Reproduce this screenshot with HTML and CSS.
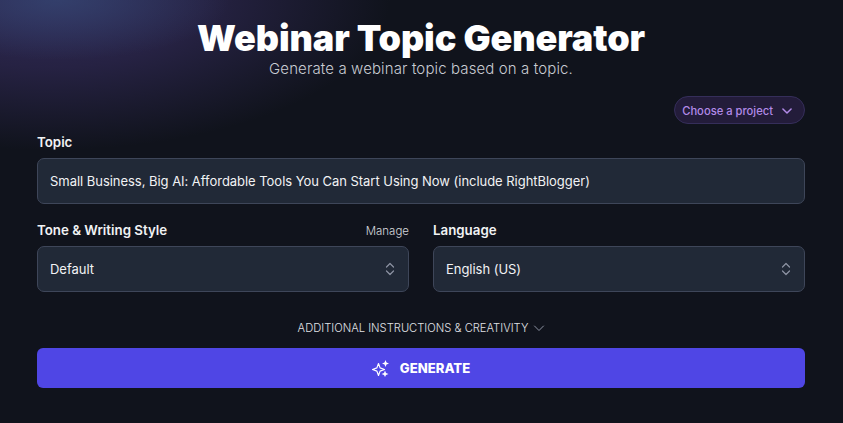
FILE: index.html
```html
<!DOCTYPE html>
<html>
	<head>
		<title>Webinar Topic Generator</title>
		<link rel="stylesheet" href="styles.css">
	</head>
	<body>
	<div class="page">
		<div class="header">
			<h1>Webinar Topic Generator</h1>
			<p>Generate a webinar topic based on a topic.</p>
		</div>
		<div class="projectRow">
			<span class="projectBtn">Choose a project
				<svg width="14" height="14" viewBox="0 0 24 24" fill="none" stroke="currentColor" stroke-width="2.6" stroke-linecap="round" stroke-linejoin="round"><path d="M5 8.5l7 7 7-7"/></svg>
			</span>
		</div>
		<div class="labelRow"><label>Topic</label></div>
		<div class="field">Small Business, Big AI: Affordable Tools You Can Start Using Now (include RightBlogger)</div>
		<div class="columns">
			<div>
				<div class="labelRow"><label>Tone &amp; Writing Style</label><span class="manage">Manage</span></div>
				<div class="field select">Default
					<svg width="12" height="14" viewBox="0 0 12 14" fill="none" stroke="#8d93a3" stroke-width="1.2" stroke-linecap="round" stroke-linejoin="round"><path d="M2.5 5L6 1.5 9.5 5M2.5 9L6 12.5 9.5 9"/></svg>
				</div>
			</div>
			<div>
				<div class="labelRow"><label>Language</label></div>
				<div class="field select">English (US)
					<svg width="12" height="14" viewBox="0 0 12 14" fill="none" stroke="#8d93a3" stroke-width="1.2" stroke-linecap="round" stroke-linejoin="round"><path d="M2.5 5L6 1.5 9.5 5M2.5 9L6 12.5 9.5 9"/></svg>
				</div>
			</div>
		</div>
		<div class="additional">ADDITIONAL INSTRUCTIONS &amp; CREATIVITY
			<svg width="12" height="12" viewBox="0 0 12 12" fill="none" stroke="#8d93a3" stroke-width="1" stroke-linecap="round" stroke-linejoin="round"><path d="M1.5 4L6 8.5 10.5 4"/></svg>
		</div>
		<div class="generate">
			<svg width="18" height="18" viewBox="0 0 18 18"><path d="M6.5 4.5l1.6 4.4 4.4 1.6-4.4 1.6-1.6 4.4-1.6-4.4L.5 10.5l4.4-1.6z" fill="none" stroke="#fff" stroke-width="1.2" stroke-linejoin="round"/><path d="M13.5 1l1 2.5 2.5 1-2.5 1-1 2.5-1-2.5-2.5-1 2.5-1z" fill="#fff"/><path d="M13 11.5l1 2.5 2.5 1-2.5 1-1 2-1-2-2.5-1 2.5-1z" fill="#fff"/></svg>
			GENERATE
		</div>
	</div>
	</body>
</html>
```

FILE: styles.css
```css
body{margin:0; height:423px; overflow:hidden; font-family:Inter,"Liberation Sans",sans-serif; color:#fff;
	background:
		radial-gradient(ellipse 170px 60px at 60px 0, rgba(52,68,112,.8) 0%, rgba(52,68,112,0) 100%),
		radial-gradient(ellipse 340px 150px at 50px 0, #302b58 0%, #262243 45%, rgba(17,20,29,0) 100%),
		#10131c;}
.page{padding:0 38px 0 37px;}
.header{text-align:center; padding-top:19px;}
h1{margin:0; font-size:36px; line-height:39px; font-weight:900; letter-spacing:-.09px;}
.header p{margin:0; font-size:15px; line-height:22px; font-weight:300; color:#c9ccd3; letter-spacing:.12px;}
.projectRow{display:flex; justify-content:flex-end; margin-top:16px;}
.projectBtn{box-sizing:border-box; display:flex; align-items:center; gap:7px; height:28px; padding:1px 10px 0 7px; border-radius:14px; background:#231c3a; border:1px solid #352e5a; color:#b28ae8; font-size:11.2px; font-weight:500;}
.labelRow{display:flex; justify-content:space-between; align-items:center; height:20px; margin-bottom:6px; margin-top:8px;}
.columns .labelRow{margin-top:3px;}
label{font-size:13.3px; font-weight:600; color:#f1f2f4;}
.manage{margin-top:2px; font-size:11.5px; font-weight:300; color:#d5d7dc;}
.field{box-sizing:border-box; height:46px; display:flex; align-items:center; justify-content:space-between; padding:0 12px; background:#212937; border:1px solid #3e4659; border-radius:7px; font-size:13px; letter-spacing:-.035px; color:#f1f2f4;}
.columns{display:grid; grid-template-columns:1fr 1fr; gap:24px; margin-top:13px;}
.additional{display:flex; justify-content:center; align-items:center; gap:5px; margin-top:29px; height:14px; padding-left:1px; font-size:11.2px; font-weight:300; color:#e0e2e6;}
.generate{display:flex; justify-content:center; align-items:center; gap:10px; height:40px; margin-top:13px; background:#4f46e5; border-radius:6px; font-size:13.1px; font-weight:800;}
```
